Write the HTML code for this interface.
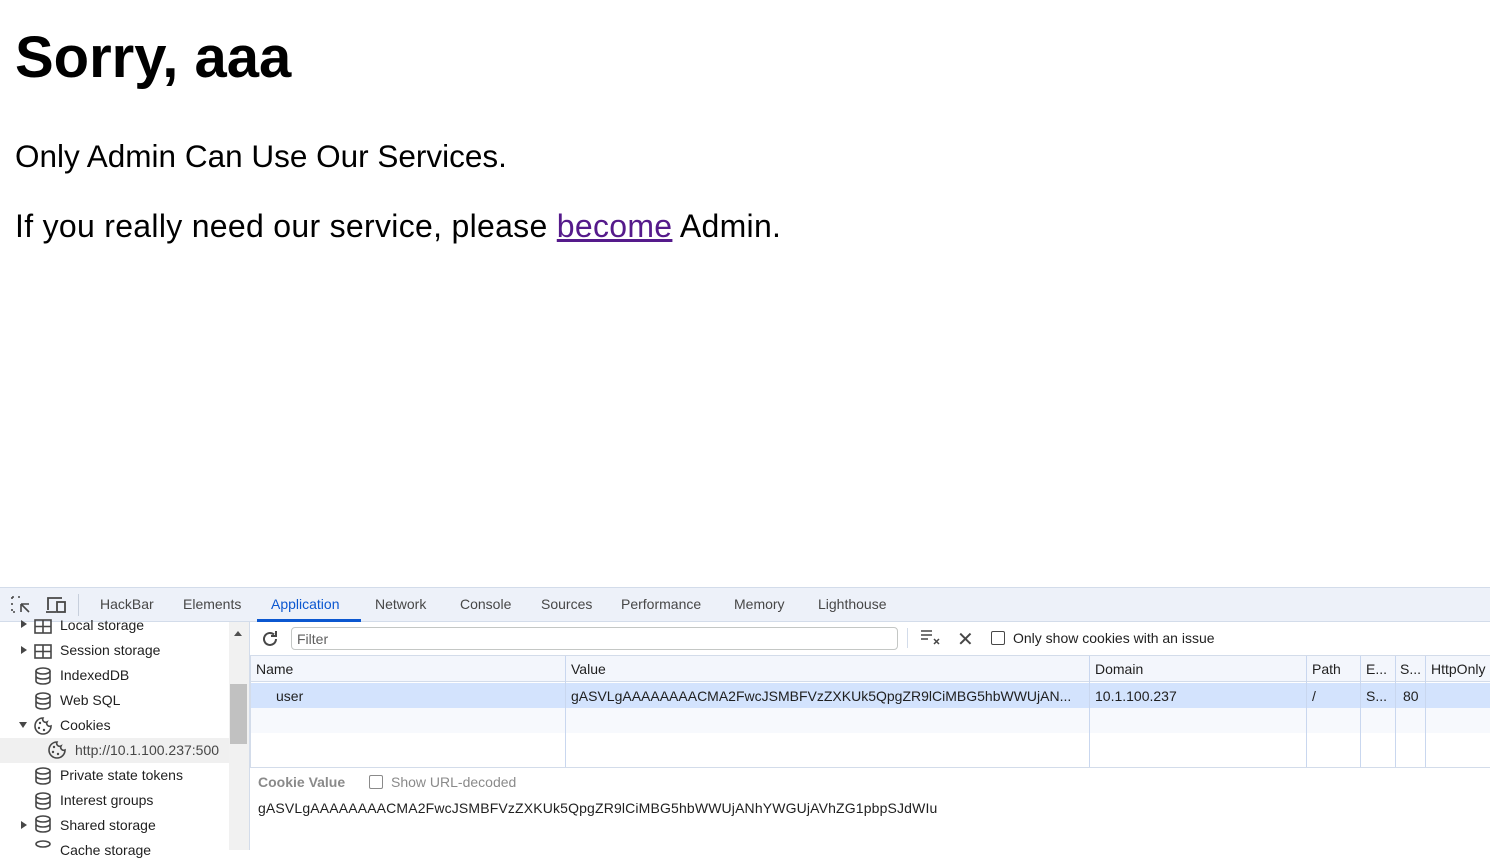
<!DOCTYPE html>
<html><head><meta charset="utf-8"><style>
*{margin:0;padding:0;box-sizing:border-box}
body{width:1490px;height:850px;overflow:hidden;background:#fff;font-family:"Liberation Sans",sans-serif;position:relative;color:#000}
.a{position:absolute;white-space:nowrap}
.dt{font-size:14px;color:#1f1f1f}
.tab{position:absolute;top:596px;font-size:14px;color:#474747}
.sb{position:absolute;left:60px;font-size:14px;color:#1f1f1f}
.tri{position:absolute;left:21px;width:0;height:0;border-top:4px solid transparent;border-bottom:4px solid transparent;border-left:6px solid #474747}
.col{position:absolute;top:656px;height:111px;border-left:1px solid #c9d7ef}
</style></head><body>
<div class="a" style="left:15px;top:24px;font-size:58px;font-weight:bold">Sorry, aaa</div>
<div class="a" style="left:15px;top:138px;font-size:31.5px">Only Admin Can Use Our Services.</div>
<div class="a" style="left:15px;top:208px;font-size:32px;letter-spacing:0.3px">If you really need our service, please <span style="color:#551a8b;text-decoration:underline">become</span> Admin.</div>

<div class="a" style="left:0;top:587px;width:1490px;height:35px;background:#edf1f9;border-top:1px solid #d3dcea;border-bottom:1px solid #d3dcea"></div>
<svg class="a" style="left:11px;top:596px" width="20" height="18" viewBox="0 0 20 18" fill="none" stroke="#474747" stroke-width="1.6"><path d="M1 1h3M7 1h3M1 1v3M1 7v3M1 13v3h3" stroke-dasharray="2 2"/><path d="M10 8l8 0M10 8v8M10 8l8 8"/></svg>
<svg class="a" style="left:45px;top:596px" width="22" height="18" viewBox="0 0 22 18" fill="none" stroke="#474747" stroke-width="1.8"><path d="M3 14V2h14M1 16h10"/><rect x="12" y="6" width="8" height="10"/></svg>
<div class="a" style="left:78px;top:594px;width:1px;height:22px;background:#c7cfdc"></div>
<div class="tab" style="left:100px">HackBar</div>
<div class="tab" style="left:183px">Elements</div>
<div class="tab" style="left:271px;color:#0b57d0">Application</div>
<div class="a" style="left:257px;top:619px;width:104px;height:3px;background:#0b57d0"></div>
<div class="tab" style="left:375px">Network</div>
<div class="tab" style="left:460px">Console</div>
<div class="tab" style="left:541px">Sources</div>
<div class="tab" style="left:621px">Performance</div>
<div class="tab" style="left:734px">Memory</div>
<div class="tab" style="left:818px">Lighthouse</div>

<div class="a" style="left:0;top:622px;width:250px;height:228px;background:#fff;overflow:hidden">
<div class="a" style="left:0;top:116px;width:229px;height:25px;background:#f0f0f0"></div>
</div>
<div class="a" style="left:229px;top:622px;width:20px;height:228px;background:#f1f1f1"></div>
<div class="a" style="left:230px;top:684px;width:17px;height:60px;background:#c1c1c1"></div>
<div class="a" style="left:234px;top:631px;border-left:4px solid transparent;border-right:4px solid transparent;border-bottom:5px solid #505050;width:0;height:0"></div>
<div class="a" style="left:249px;top:622px;width:1px;height:228px;background:#d3dcea"></div>

<div class="tri" style="top:620px"></div><div class="sb" style="top:617px">Local storage</div>
<div class="tri" style="top:646px"></div><div class="sb" style="top:642px">Session storage</div>
<div class="sb" style="top:667px">IndexedDB</div>
<div class="sb" style="top:692px">Web SQL</div>
<div class="a" style="left:19px;top:722px;border-left:4px solid transparent;border-right:4px solid transparent;border-top:6px solid #474747;width:0;height:0"></div>
<div class="sb" style="top:717px">Cookies</div>
<div class="sb" style="left:75px;top:742px;color:#474747">http://10.1.100.237:500</div>
<div class="sb" style="top:767px">Private state tokens</div>
<div class="sb" style="top:792px">Interest groups</div>
<div class="tri" style="top:821px"></div><div class="sb" style="top:817px">Shared storage</div>
<div class="sb" style="top:842px">Cache storage</div>
<svg class="a" style="left:34px;top:619px" width="18" height="200" viewBox="0 0 18 200" fill="none" stroke="#474747" stroke-width="1.6">
<rect x="1" y="1" width="16" height="13"/><path d="M1 7.5h16M9 1v13"/>
<rect x="1" y="26" width="16" height="13"/><path d="M1 32.5h16M9 26v13"/>
<ellipse cx="9" cy="52" rx="7" ry="3"/><path d="M2 52v10c0 4 14 4 14 0V52M2 57c0 4 14 4 14 0"/>
<ellipse cx="9" cy="77" rx="7" ry="3"/><path d="M2 77v10c0 4 14 4 14 0V77M2 82c0 4 14 4 14 0"/>
<path d="M9 99a8 8 0 1 0 8 8 3 3 0 0 1-4-4 3 3 0 0 1-4-4z"/>
<g fill="#474747" stroke="none"><circle cx="6" cy="104" r="1.2"/><circle cx="5" cy="109" r="1.2"/><circle cx="10" cy="111" r="1.2"/></g>
<ellipse cx="9" cy="152" rx="7" ry="3"/><path d="M2 152v10c0 4 14 4 14 0V152M2 157c0 4 14 4 14 0"/>
<ellipse cx="9" cy="177" rx="7" ry="3"/><path d="M2 177v10c0 4 14 4 14 0V177M2 182c0 4 14 4 14 0"/>
</svg>
<svg class="a" style="left:34px;top:815px" width="18" height="40" viewBox="0 0 18 40" fill="none" stroke="#474747" stroke-width="1.6"><ellipse cx="9" cy="4" rx="7" ry="3"/><path d="M2 4v10c0 4 14 4 14 0V4M2 9c0 4 14 4 14 0"/><ellipse cx="9" cy="29" rx="7" ry="3"/></svg>
<svg class="a" style="left:48px;top:741px" width="18" height="18" viewBox="0 0 18 18" fill="none" stroke="#474747" stroke-width="1.6"><path d="M9 1a8 8 0 1 0 8 8 3 3 0 0 1-4-4 3 3 0 0 1-4-4z"/><g fill="#474747" stroke="none"><circle cx="6" cy="6" r="1.2"/><circle cx="5" cy="11" r="1.2"/><circle cx="10" cy="13" r="1.2"/></g></svg>

<svg class="a" style="left:260px;top:629px" width="20" height="20" viewBox="0 0 20 20" fill="none" stroke="#474747" stroke-width="2"><path d="M16 10a6 6 0 1 1-2-4.5"/><path d="M16 2v5h-5"/></svg>
<div class="a" style="left:291px;top:627px;width:607px;height:23px;border:1px solid #c4c7c5;border-radius:4px;font-size:14px;color:#5e5e5e;padding:3px 0 0 5px">Filter</div>
<div class="a" style="left:907px;top:628px;width:1px;height:20px;background:#d3dcea"></div>
<svg class="a" style="left:921px;top:630px" width="20" height="16" viewBox="0 0 20 16" stroke="#474747" stroke-width="1.5"><path d="M0 1h11M0 5h11M0 9h7M13 9l5 5M18 9l-5 5"/></svg>
<div class="a dt" style="left:957px;top:627px;font-size:20px;color:#474747">✕</div>
<div class="a" style="left:991px;top:631px;width:14px;height:14px;border:1px solid #474747;border-radius:2px"></div>
<div class="a dt" style="left:1013px;top:630px">Only show cookies with an issue</div>
<div class="a" style="left:250px;top:655px;width:1240px;height:1px;background:#d3dcea"></div>

<div class="a" style="left:251px;top:656px;width:1239px;height:26px;background:#f3f6fc;border-bottom:1px solid #d3dcea"></div>
<div class="a" style="left:251px;top:683px;width:1239px;height:25px;background:#d3e3fd"></div>
<div class="a" style="left:251px;top:708px;width:1239px;height:25px;background:#f7f9fd"></div>
<div class="col" style="left:565px"></div><div class="col" style="left:1089px"></div><div class="col" style="left:1306px"></div><div class="col" style="left:1360px"></div><div class="col" style="left:1395px"></div><div class="col" style="left:1425px"></div>
<div class="a" style="left:250px;top:656px;width:1px;height:112px;background:#d3dcea"></div>
<div class="a" style="left:250px;top:767px;width:1240px;height:1px;background:#d3dcea"></div>
<div class="a dt" style="left:256px;top:661px">Name</div>
<div class="a dt" style="left:571px;top:661px">Value</div>
<div class="a dt" style="left:1095px;top:661px">Domain</div>
<div class="a dt" style="left:1312px;top:661px">Path</div>
<div class="a dt" style="left:1366px;top:661px">E...</div>
<div class="a dt" style="left:1400px;top:661px">S...</div>
<div class="a dt" style="left:1431px;top:661px">HttpOnly</div>
<div class="a dt" style="left:276px;top:688px">user</div>
<div class="a dt" style="left:571px;top:688px">gASVLgAAAAAAAACMA2FwcJSMBFVzZXKUk5QpgZR9lCiMBG5hbWWUjAN...</div>
<div class="a dt" style="left:1095px;top:688px">10.1.100.237</div>
<div class="a dt" style="left:1312px;top:688px">/</div>
<div class="a dt" style="left:1366px;top:688px">S...</div>
<div class="a dt" style="left:1403px;top:688px">80</div>

<div class="a dt" style="left:258px;top:774px;font-weight:bold;color:#8a8a8a">Cookie Value</div>
<div class="a" style="left:369px;top:775px;width:14px;height:14px;border:1px solid #8a8a8a;border-radius:2px"></div>
<div class="a dt" style="left:391px;top:774px;color:#8a8a8a">Show URL-decoded</div>
<div class="a dt" style="left:258px;top:800px;letter-spacing:0.15px">gASVLgAAAAAAAACMA2FwcJSMBFVzZXKUk5QpgZR9lCiMBG5hbWWUjANhYWGUjAVhZG1pbpSJdWIu</div>
</body></html>
